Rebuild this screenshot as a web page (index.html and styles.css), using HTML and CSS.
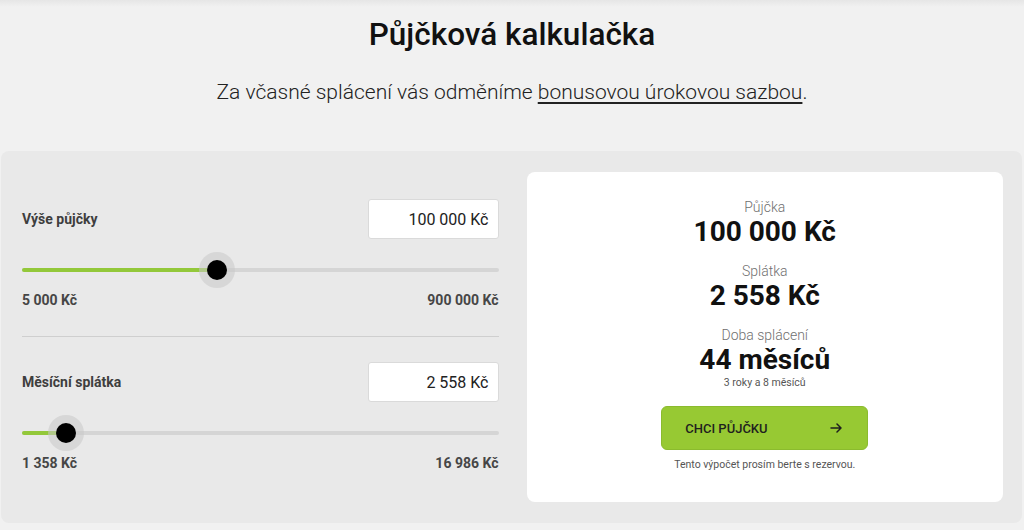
FILE: index.html
```html
<!DOCTYPE html>
<html lang="cs">
<head>
    <meta charset="UTF-8">
    <meta name="viewport" content="width=device-width, initial-scale=1.0">
    <title>Půjčková kalkulačka</title>
    <link rel="stylesheet" href="styles.css">
</head>
<body>
    <header class="intro">
        <h1>Půjčková kalkulačka</h1>
        <p>Za včasné splácení vás odměníme <a href="#">bonusovou úrokovou sazbou</a>.</p>
    </header>

    <section class="calculator">
        <div class="controls">
            <div class="field field-first">
                <div class="field-row">
                    <label for="amount">Výše půjčky</label>
                    <input id="amount" class="value-input" type="text" value="100 000 Kč">
                </div>
                <div class="slider">
                    <div class="slider-fill" style="width: 40.9%"></div>
                    <span class="slider-thumb" style="left: 40.9%"></span>
                </div>
                <div class="slider-range">
                    <span>5 000 Kč</span>
                    <span>900 000 Kč</span>
                </div>
            </div>

            <div class="field">
                <div class="field-row">
                    <label for="payment">Měsíční splátka</label>
                    <input id="payment" class="value-input" type="text" value="2 558 Kč">
                </div>
                <div class="slider">
                    <div class="slider-fill" style="width: 9.2%"></div>
                    <span class="slider-thumb" style="left: 9.2%"></span>
                </div>
                <div class="slider-range">
                    <span>1 358 Kč</span>
                    <span>16 986 Kč</span>
                </div>
            </div>
        </div>

        <div class="summary">
            <div class="summary-item">
                <span class="summary-label">Půjčka</span>
                <strong class="summary-value">100 000 Kč</strong>
            </div>
            <div class="summary-item">
                <span class="summary-label">Splátka</span>
                <strong class="summary-value">2 558 Kč</strong>
            </div>
            <div class="summary-item">
                <span class="summary-label">Doba splácení</span>
                <strong class="summary-value">44 měsíců</strong>
                <span class="summary-note">3 roky a 8 měsíců</span>
            </div>
            <button class="cta">
                <span>CHCI PŮJČKU</span>
                <svg width="12" height="10" viewBox="0 0 12 10" fill="none" stroke="#1f1f1f" stroke-width="1.5" stroke-linecap="round" stroke-linejoin="round">
                    <path d="M1 5h10M7 1l4 4-4 4"/>
                </svg>
            </button>
            <p class="disclaimer">Tento výpočet prosím berte s rezervou.</p>
        </div>
    </section>
</body>
</html>
```

FILE: styles.css
```css
* {
    margin: 0;
    padding: 0;
    box-sizing: border-box;
}

body {
    font-family: Roboto, 'Noto Sans', sans-serif;
    background-color: #f1f1f1;
    background-image: linear-gradient(#e6e6e6, #f1f1f1);
    background-size: 100% 7px;
    background-repeat: no-repeat;
    color: #1a1a1a;
}

/* Header */
.intro {
    text-align: center;
    padding-top: 17px;
}

.intro h1 {
    font-size: 31.5px;
    line-height: 36px;
    font-weight: 500;
    color: #111;
}

.intro p {
    margin-top: 26px;
    font-size: 21px;
    line-height: 26px;
    font-weight: 300;
    color: #222;
}

.intro a {
    color: #222;
    text-decoration: underline;
    text-underline-offset: 3px;
}

/* Calculator panel */
.calculator {
    margin: 46px 2px 0 1px;
    padding: 21px 19px 21px 21px;
    background-color: #e9e9e9;
    border-radius: 8px;
    display: grid;
    grid-template-columns: 1fr 1fr;
    gap: 28px;
}

.controls {
    display: flex;
    flex-direction: column;
}

.field {
    padding-top: 25px;
}

.field-first {
    padding-top: 27px;
    padding-bottom: 28px;
    border-bottom: 1px solid #cfcfcf;
}

.field-row {
    display: flex;
    justify-content: space-between;
    align-items: center;
    height: 40px;
}

.field-row label {
    font-size: 14px;
    font-weight: 700;
    color: #3e3e3e;
}

.value-input {
    width: 131px;
    height: 40px;
    padding: 0 9px;
    border: 1px solid #dadada;
    border-radius: 3px;
    background: #fff;
    font-family: inherit;
    font-size: 16px;
    color: #222;
    text-align: right;
    outline: none;
}

.slider {
    position: relative;
    margin-top: 29px;
    height: 4px;
    border-radius: 2px;
    background-color: #d5d5d5;
}

.slider-fill {
    height: 100%;
    border-radius: 2px;
    background-color: #93c83a;
}

.slider-thumb {
    position: absolute;
    top: 50%;
    width: 20px;
    height: 20px;
    margin: -10px 0 0 -10px;
    border-radius: 50%;
    background-color: #000;
    box-shadow: 0 0 0 8px rgba(200, 200, 200, 0.55);
}

.slider-range {
    display: flex;
    justify-content: space-between;
    margin-top: 20px;
    font-size: 14px;
    line-height: 16px;
    font-weight: 700;
    color: #464646;
}

/* Summary card */
.summary {
    background-color: #fff;
    border-radius: 8px;
    padding: 26px 20px 30px;
    display: flex;
    flex-direction: column;
    align-items: center;
    text-align: center;
}

.summary-item {
    display: flex;
    flex-direction: column;
    align-items: center;
    margin-bottom: 14px;
}

.summary-item:last-of-type {
    margin-bottom: 0;
}

.summary-label {
    font-size: 14px;
    line-height: 18px;
    font-weight: 300;
    color: #6f6f6f;
}

.summary-value {
    font-size: 28px;
    line-height: 32px;
    font-weight: 700;
    color: #111;
}

.summary-note {
    font-size: 10.5px;
    line-height: 13px;
    color: #555;
}

.cta {
    margin-top: 17px;
    width: 207px;
    height: 44px;
    padding: 0 25px 0 23px;
    display: flex;
    justify-content: space-between;
    align-items: center;
    border: 1px solid #8bbb2e;
    border-radius: 6px;
    background-color: #97c933;
    font-family: inherit;
    font-size: 13px;
    font-weight: 500;
    color: #1f1f1f;
    cursor: pointer;
}

.disclaimer {
    margin-top: 8px;
    font-size: 10.5px;
    line-height: 14px;
    color: #555;
}
```
